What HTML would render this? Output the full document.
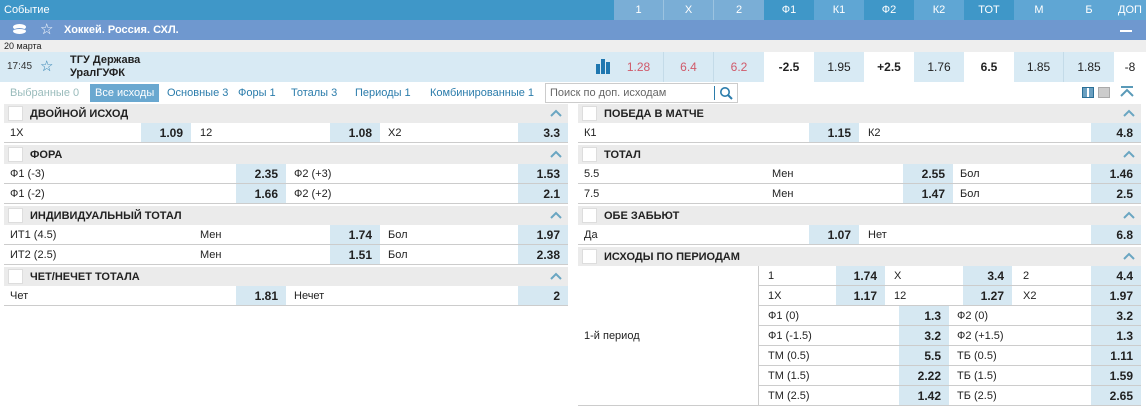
<!DOCTYPE html><html><head><meta charset="utf-8"><style>
*{margin:0;padding:0;box-sizing:border-box}
body{width:1146px;height:408px;position:relative;background:#fff;font-family:"Liberation Sans","DejaVu Sans",sans-serif;font-size:11px;color:#222;overflow:hidden}
.a{position:absolute;white-space:nowrap}
.hd{top:0;height:20px;line-height:20px;color:#fff;text-align:center;font-size:11px}
.mc{top:52px;height:30px;line-height:30px;text-align:center;font-size:12px}
.sh{position:absolute;height:19px;background:#ebebeb;font-weight:bold;font-size:11px;line-height:20px}
.sh .cb{position:absolute;left:4px;top:2px;width:15px;height:15px;background:#fff;border:1px solid #ddd}
.sh .t{position:absolute;left:26px}
.sh svg{position:absolute;right:6px;top:5px}
.r{position:absolute;height:20px;border-bottom:1px solid #ccc;line-height:20px}
.l{position:absolute;top:0}
.o{position:absolute;top:0;height:19px;background:#d6e8f2;text-align:right;padding-right:8px;font-weight:bold;font-size:12px}
</style></head><body>
<svg width="0" height="0" style="position:absolute"><defs><symbol id="ch" viewBox="0 0 12 8"><path d="M1 7L6 2L11 7" fill="none" stroke="#6aa6c2" stroke-width="2"/></symbol></defs></svg>
<div class="a" style="left:0;top:0;width:1146px;height:20px;background:#3f97c8"></div>
<div class="a hd" style="left:4px;text-align:left">Событие</div>
<div class="a hd" style="left:614px;width:50px;background:#7aaed6;border-right:1px solid #9cc3e0">1</div>
<div class="a hd" style="left:664px;width:50px;background:#7aaed6;border-right:1px solid #9cc3e0">X</div>
<div class="a hd" style="left:714px;width:50px;background:#7aaed6">2</div>
<div class="a hd" style="left:764px;width:50px;background:#3f97c8">Ф1</div>
<div class="a hd" style="left:814px;width:50px;background:#5fa6d4">К1</div>
<div class="a hd" style="left:864px;width:50px;background:#3f97c8">Ф2</div>
<div class="a hd" style="left:914px;width:50px;background:#5fa6d4">К2</div>
<div class="a hd" style="left:964px;width:50px;background:#3f97c8">ТОТ</div>
<div class="a hd" style="left:1014px;width:50px;background:#5fa6d4">М</div>
<div class="a hd" style="left:1064px;width:50px;background:#5fa6d4">Б</div>
<div class="a hd" style="left:1114px;width:32px;background:#5fa6d4">ДОП</div>
<div class="a" style="left:0;top:20px;width:1146px;height:20px;background:#6f98cf"></div>
<div class="a" style="left:13px;top:24px;width:13px;height:6px;background:#fff;border-radius:50%"></div>
<div class="a" style="left:13px;top:28px;width:13px;height:6px;background:#fff;border-radius:50%;border-top:1px solid #6f98cf"></div>
<div class="a" style="left:40px;top:20px;line-height:20px;color:#fff;font-size:15px">☆</div>
<div class="a" style="left:64px;top:20px;line-height:20px;color:#fff;font-weight:bold">Хоккей. Россия. СХЛ.</div>
<div class="a" style="left:1120px;top:30px;width:12px;height:2px;background:#fff"></div>
<div class="a" style="left:0;top:40px;width:1146px;height:12px;background:#eeeeee"></div>
<div class="a" style="left:4px;top:40px;font-size:9px;line-height:12px">20 марта</div>
<div class="a" style="left:0;top:52px;width:1146px;height:30px;background:#d8eaf4"></div>
<div class="a" style="left:7px;top:52px;line-height:30px;font-size:10px;color:#333">17:45</div>
<div class="a" style="left:40px;top:52px;line-height:30px;font-size:15px;color:#2c7fb0">☆</div>
<div class="a" style="left:70px;top:54px;font-weight:bold;font-size:11px;line-height:13px">ТГУ Держава<br>УралГУФК</div>
<div class="a" style="left:596px;top:64px;width:4px;height:10px;background:#1f77b0"></div>
<div class="a" style="left:601px;top:59px;width:4px;height:15px;background:#1f77b0"></div>
<div class="a" style="left:606px;top:62px;width:4px;height:12px;background:#1f77b0"></div>
<div class="a mc" style="left:614px;width:50px;color:#d05a6a;border-right:1px solid #c4dbe8">1.28</div>
<div class="a mc" style="left:664px;width:50px;color:#d05a6a;border-right:1px solid #c4dbe8">6.4</div>
<div class="a mc" style="left:714px;width:50px;color:#d05a6a">6.2</div>
<div class="a mc" style="left:764px;width:50px;background:#fff;font-weight:bold">-2.5</div>
<div class="a mc" style="left:814px;width:50px">1.95</div>
<div class="a mc" style="left:864px;width:50px;background:#fff;font-weight:bold">+2.5</div>
<div class="a mc" style="left:914px;width:50px">1.76</div>
<div class="a mc" style="left:964px;width:50px;background:#fff;font-weight:bold">6.5</div>
<div class="a mc" style="left:1014px;width:50px;border-right:1px solid #c4dbe8">1.85</div>
<div class="a mc" style="left:1064px;width:50px">1.85</div>
<div class="a mc" style="left:1114px;width:32px;background:#fff">-8</div>
<div class="a" style="left:4px;top:82px;width:1137px;height:22px;line-height:22px;font-size:11px;color:#2b7cab">
<span style="position:absolute;left:6px;color:#9bb">Выбранные 0</span>
<span style="position:absolute;left:86px;top:2px;height:18px;line-height:18px;background:#6aa8d0;color:#fff;padding:0 5px">Все исходы</span>
<span style="position:absolute;left:163px">Основные 3</span>
<span style="position:absolute;left:234px">Форы 1</span>
<span style="position:absolute;left:287px">Тоталы 3</span>
<span style="position:absolute;left:351px">Периоды 1</span>
<span style="position:absolute;left:426px">Комбинированные 1</span>
</div>
<div class="a" style="left:545px;top:83px;width:193px;height:20px;border:1px solid #ccc;color:#666;line-height:18px;padding-left:4px">Поиск по доп. исходам</div>
<div class="a" style="left:714px;top:86px;width:1px;height:14px;background:#2b7cab"></div>
<svg class="a" style="left:719px;top:86px" width="14" height="14" viewBox="0 0 14 14"><circle cx="6" cy="6" r="4.2" fill="none" stroke="#2b7cab" stroke-width="1.6"/><path d="M9 9L13 13" stroke="#2b7cab" stroke-width="2"/></svg>
<div class="a" style="left:1082px;top:87px;width:12px;height:11px;border:1px solid #2b6f96;background:#6a9fc0"></div>
<div class="a" style="left:1087px;top:88px;width:2px;height:9px;background:#fff"></div>
<div class="a" style="left:1098px;top:87px;width:12px;height:11px;border:1px solid #aaa;background:#ccc"></div>
<svg class="a" style="left:1120px;top:86px" width="14" height="12" viewBox="0 0 14 12"><path d="M1 1H13" stroke="#5a9ab8" stroke-width="2"/><path d="M1 10L7 4L13 10" fill="none" stroke="#5a9ab8" stroke-width="2"/></svg>

<!-- LEFT -->
<div class="sh" style="left:4px;top:104px;width:564px"><span class="cb"></span><span class="t">ДВОЙНОЙ ИСХОД</span><svg width="12" height="8"><use href="#ch"/></svg></div>
<div class="r" style="left:4px;top:123px;width:564px"><span class="l" style="left:6px">1X</span><span class="o" style="left:137px;width:50px">1.09</span><span class="l" style="left:196px">12</span><span class="o" style="left:326px;width:50px">1.08</span><span class="l" style="left:384px">X2</span><span class="o" style="left:514px;width:50px">3.3</span></div>
<div class="sh" style="left:4px;top:145px;width:564px"><span class="cb"></span><span class="t">ФОРА</span><svg width="12" height="8"><use href="#ch"/></svg></div>
<div class="r" style="left:4px;top:164px;width:564px"><span class="l" style="left:6px">Ф1 (-3)</span><span class="o" style="left:232px;width:50px">2.35</span><span class="l" style="left:290px">Ф2 (+3)</span><span class="o" style="left:514px;width:50px">1.53</span></div>
<div class="r" style="left:4px;top:184px;width:564px"><span class="l" style="left:6px">Ф1 (-2)</span><span class="o" style="left:232px;width:50px">1.66</span><span class="l" style="left:290px">Ф2 (+2)</span><span class="o" style="left:514px;width:50px">2.1</span></div>
<div class="sh" style="left:4px;top:206px;width:564px"><span class="cb"></span><span class="t">ИНДИВИДУАЛЬНЫЙ ТОТАЛ</span><svg width="12" height="8"><use href="#ch"/></svg></div>
<div class="r" style="left:4px;top:225px;width:564px"><span class="l" style="left:6px">ИТ1 (4.5)</span><span class="l" style="left:196px">Мен</span><span class="o" style="left:326px;width:50px">1.74</span><span class="l" style="left:384px">Бол</span><span class="o" style="left:514px;width:50px">1.97</span></div>
<div class="r" style="left:4px;top:245px;width:564px"><span class="l" style="left:6px">ИТ2 (2.5)</span><span class="l" style="left:196px">Мен</span><span class="o" style="left:326px;width:50px">1.51</span><span class="l" style="left:384px">Бол</span><span class="o" style="left:514px;width:50px">2.38</span></div>
<div class="sh" style="left:4px;top:267px;width:564px"><span class="cb"></span><span class="t">ЧЕТ/НЕЧЕТ ТОТАЛА</span><svg width="12" height="8"><use href="#ch"/></svg></div>
<div class="r" style="left:4px;top:286px;width:564px"><span class="l" style="left:6px">Чет</span><span class="o" style="left:232px;width:50px">1.81</span><span class="l" style="left:290px">Нечет</span><span class="o" style="left:514px;width:50px">2</span></div>

<!-- RIGHT -->
<div class="sh" style="left:578px;top:104px;width:563px"><span class="cb"></span><span class="t">ПОБЕДА В МАТЧЕ</span><svg width="12" height="8"><use href="#ch"/></svg></div>
<div class="r" style="left:578px;top:123px;width:563px"><span class="l" style="left:6px">К1</span><span class="o" style="left:231px;width:50px">1.15</span><span class="l" style="left:290px">К2</span><span class="o" style="left:513px;width:50px">4.8</span></div>
<div class="sh" style="left:578px;top:145px;width:563px"><span class="cb"></span><span class="t">ТОТАЛ</span><svg width="12" height="8"><use href="#ch"/></svg></div>
<div class="r" style="left:578px;top:164px;width:563px"><span class="l" style="left:6px">5.5</span><span class="l" style="left:194px">Мен</span><span class="o" style="left:325px;width:50px">2.55</span><span class="l" style="left:382px">Бол</span><span class="o" style="left:513px;width:50px">1.46</span></div>
<div class="r" style="left:578px;top:184px;width:563px"><span class="l" style="left:6px">7.5</span><span class="l" style="left:194px">Мен</span><span class="o" style="left:325px;width:50px">1.47</span><span class="l" style="left:382px">Бол</span><span class="o" style="left:513px;width:50px">2.5</span></div>
<div class="sh" style="left:578px;top:206px;width:563px"><span class="cb"></span><span class="t">ОБЕ ЗАБЬЮТ</span><svg width="12" height="8"><use href="#ch"/></svg></div>
<div class="r" style="left:578px;top:225px;width:563px"><span class="l" style="left:6px">Да</span><span class="o" style="left:231px;width:50px">1.07</span><span class="l" style="left:290px">Нет</span><span class="o" style="left:513px;width:50px">6.8</span></div>
<div class="sh" style="left:578px;top:247px;width:563px"><span class="cb"></span><span class="t">ИСХОДЫ ПО ПЕРИОДАМ</span><svg width="12" height="8"><use href="#ch"/></svg></div>
<div class="a" style="left:578px;top:266px;width:563px;height:140px;border-bottom:1px solid #ccc"></div>
<div class="a" style="left:584px;top:329px;line-height:14px">1-й период</div>
<div class="r" style="left:758px;top:266px;width:383px"><span class="l" style="left:10px">1</span><span class="o" style="left:78px;width:49px">1.74</span><span class="l" style="left:136px">X</span><span class="o" style="left:205px;width:49px">3.4</span><span class="l" style="left:265px">2</span><span class="o" style="left:333px;width:50px">4.4</span></div>
<div class="r" style="left:758px;top:286px;width:383px"><span class="l" style="left:10px">1X</span><span class="o" style="left:78px;width:49px">1.17</span><span class="l" style="left:136px">12</span><span class="o" style="left:205px;width:49px">1.27</span><span class="l" style="left:265px">X2</span><span class="o" style="left:333px;width:50px">1.97</span></div>
<div class="r" style="left:758px;top:306px;width:383px"><span class="l" style="left:10px">Ф1 (0)</span><span class="o" style="left:141px;width:50px">1.3</span><span class="l" style="left:199px">Ф2 (0)</span><span class="o" style="left:333px;width:50px">3.2</span></div>
<div class="r" style="left:758px;top:326px;width:383px"><span class="l" style="left:10px">Ф1 (-1.5)</span><span class="o" style="left:141px;width:50px">3.2</span><span class="l" style="left:199px">Ф2 (+1.5)</span><span class="o" style="left:333px;width:50px">1.3</span></div>
<div class="r" style="left:758px;top:346px;width:383px"><span class="l" style="left:10px">ТМ (0.5)</span><span class="o" style="left:141px;width:50px">5.5</span><span class="l" style="left:199px">ТБ (0.5)</span><span class="o" style="left:333px;width:50px">1.11</span></div>
<div class="r" style="left:758px;top:366px;width:383px"><span class="l" style="left:10px">ТМ (1.5)</span><span class="o" style="left:141px;width:50px">2.22</span><span class="l" style="left:199px">ТБ (1.5)</span><span class="o" style="left:333px;width:50px">1.59</span></div>
<div class="r" style="left:758px;top:386px;width:383px;border-bottom:none"><span class="l" style="left:10px">ТМ (2.5)</span><span class="o" style="left:141px;width:50px">1.42</span><span class="l" style="left:199px">ТБ (2.5)</span><span class="o" style="left:333px;width:50px">2.65</span></div>
<div class="a" style="left:758px;top:266px;width:1px;height:140px;background:#ccc"></div>
</body></html>
